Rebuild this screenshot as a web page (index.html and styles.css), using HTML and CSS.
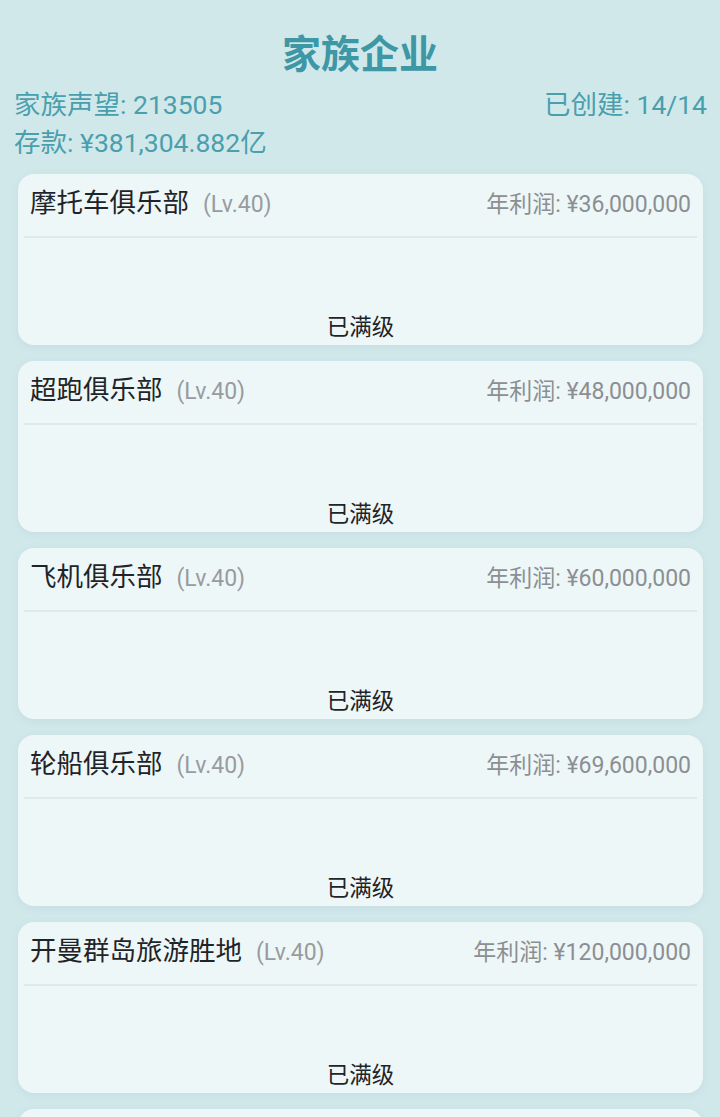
FILE: index.html
```html
<!DOCTYPE html>
<html lang="zh">
<head>
<meta charset="utf-8">
<title>家族企业</title>
<link rel="stylesheet" href="styles.css">
</head>
<body>
<div class="page">
  <h1 class="title">家族企业</h1>
  <div class="stats">
    <div class="stat-row">
      <span>家族声望: 213505</span>
      <span>已创建: 14/14</span>
    </div>
    <div class="stat-row">
      <span>存款: ¥381,304.882亿</span>
    </div>
  </div>
  <div class="list">
    <div class="card">
      <div class="card-head">
        <div class="name">摩托车俱乐部<span class="lv">(Lv.40)</span></div>
        <div class="profit">年利润: ¥36,000,000</div>
      </div>
      <div class="card-body"><span class="status">已满级</span></div>
    </div>
    <div class="card">
      <div class="card-head">
        <div class="name">超跑俱乐部<span class="lv">(Lv.40)</span></div>
        <div class="profit">年利润: ¥48,000,000</div>
      </div>
      <div class="card-body"><span class="status">已满级</span></div>
    </div>
    <div class="card">
      <div class="card-head">
        <div class="name">飞机俱乐部<span class="lv">(Lv.40)</span></div>
        <div class="profit">年利润: ¥60,000,000</div>
      </div>
      <div class="card-body"><span class="status">已满级</span></div>
    </div>
    <div class="card">
      <div class="card-head">
        <div class="name">轮船俱乐部<span class="lv">(Lv.40)</span></div>
        <div class="profit">年利润: ¥69,600,000</div>
      </div>
      <div class="card-body"><span class="status">已满级</span></div>
    </div>
    <div class="card">
      <div class="card-head">
        <div class="name">开曼群岛旅游胜地<span class="lv">(Lv.40)</span></div>
        <div class="profit">年利润: ¥120,000,000</div>
      </div>
      <div class="card-body"><span class="status">已满级</span></div>
    </div>
    <div class="card card-peek"></div>
  </div>
</div>
</body>
</html>
```

FILE: styles.css
```css
html, body {
  margin: 0;
  padding: 0;
  background: #d1e8eb;
}
body {
  font-family: Roboto, "Noto Sans CJK SC", sans-serif;
  overflow: hidden;
}
.page {
  display: flex;
  flex-direction: column;
}
.title {
  margin: 30px 0 0;
  font-size: 39px;
  line-height: 50px;
  font-weight: 700;
  color: #3e97a5;
  text-align: center;
}
.stats {
  padding: 6px 13px 0 14px;
  color: #4a9fad;
  font-size: 26.5px;
  line-height: 38px;
}
.stat-row {
  display: flex;
  justify-content: space-between;
}
.list {
  margin: 12px 17px 0 18px;
  display: flex;
  flex-direction: column;
  gap: 16px;
}
.card {
  background: #eef7f7;
  border-radius: 16px;
  padding: 0 6px;
  box-shadow: 0 2px 8px rgba(60, 110, 120, 0.08);
}
.card-peek {
  height: 40px;
}
.card-head {
  box-sizing: border-box;
  height: 64px;
  padding: 15px 6px 0;
  display: flex;
  justify-content: space-between;
  align-items: baseline;
  border-bottom: 2px solid #dfeaeb;
}
.name {
  font-size: 26.5px;
  line-height: 28px;
  color: #1f2429;
}
.lv {
  margin-left: 14px;
  font-size: 23px;
  color: #989b9f;
}
.profit {
  font-size: 23px;
  line-height: 28px;
  color: #8b8f93;
}
.card-body {
  box-sizing: border-box;
  height: 107px;
  padding-bottom: 6px;
  display: flex;
  justify-content: center;
  align-items: flex-end;
}
.status {
  font-size: 22.5px;
  line-height: 24px;
  color: #1f2429;
}
```
